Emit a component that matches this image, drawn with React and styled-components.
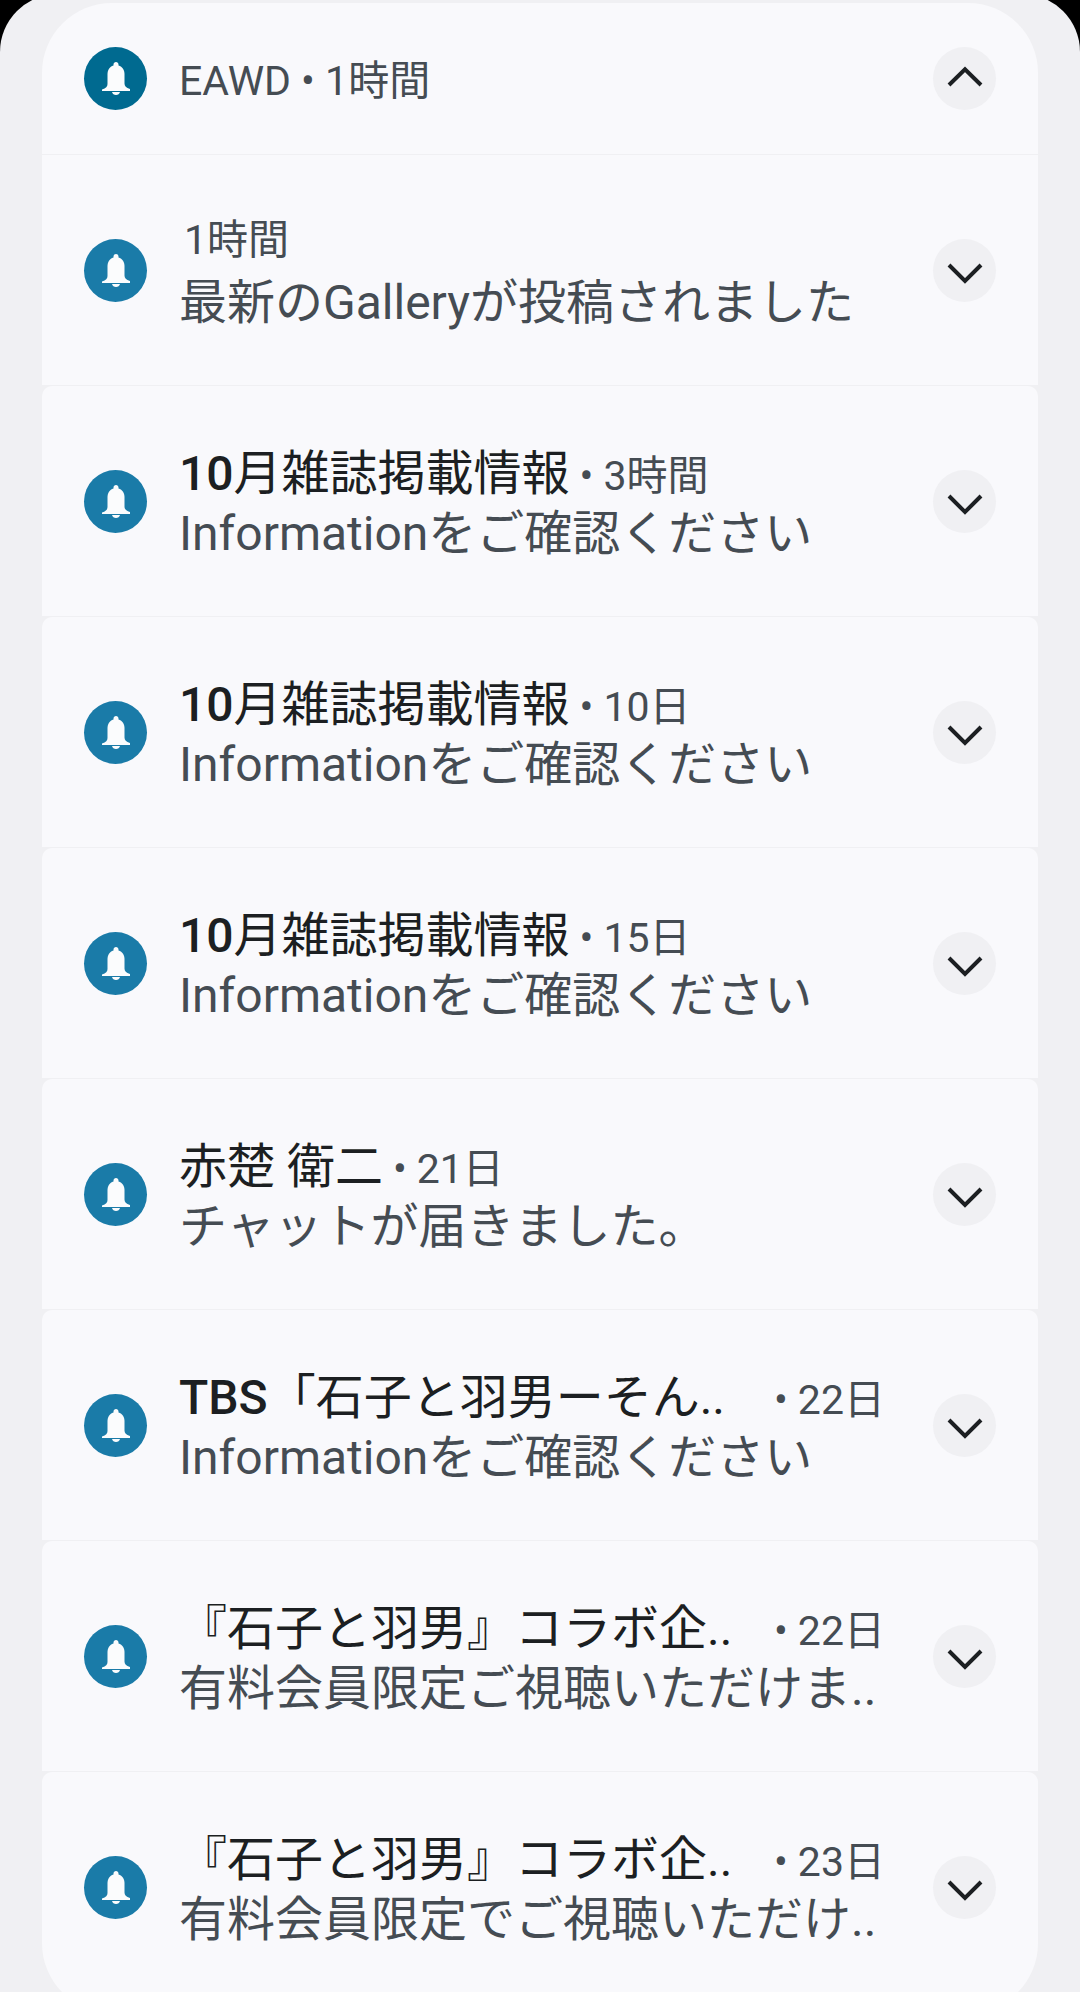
import styled, { createGlobalStyle } from 'styled-components';

const GlobalStyle = createGlobalStyle`
  html, body {
    margin: 0;
    padding: 0;
    background: #000;
    height: 1992px;
    overflow: hidden;
  }
  body {
    font-family: Roboto, "Noto Sans CJK JP", sans-serif;
  }
`;

const Screen = styled.div`
  width: 1080px;
  height: 1998px;
  margin-top: -6px;
  overflow: hidden;
  box-sizing: border-box;
  padding: 9px 42px 0 42px;
  background: #f0f0f3;
  border-radius: 58px 58px 0 0;
`;

const Header = styled.div`
  height: 152px;
  box-sizing: border-box;
  padding: 44px 42px 0;
  display: flex;
  justify-content: space-between;
  background: #f9f9fc;
  border-radius: 70px 70px 0 0;
  border-bottom: 1px solid #f0f0f3;
`;

const HeaderLeft = styled.div`
  display: flex;
  gap: 32px;
`;

const HeaderText = styled.div`
  height: 63px;
  font-size: 41px;
  line-height: 68px;
  color: #454c53;
`;

const Row = styled.div`
  height: 230px;
  box-sizing: border-box;
  padding: 0 42px;
  display: flex;
  align-items: center;
  background: #f9f9fc;
  border-radius: ${p => (p.$first ? '0' : '10px 10px 0 0')};
  margin-bottom: 1px;
  ${p => p.$last && 'height: 241px; padding-bottom: 11px; border-radius: 10px 10px 70px 70px;'}
`;

const Icon = styled.div`
  width: 63px;
  height: 63px;
  flex-shrink: 0;
  border-radius: 50%;
  display: flex;
  align-items: center;
  justify-content: center;
  background: ${p => (p.$dark ? '#006a90' : '#1a7ba8')};
`;

const Body = styled.div`
  flex: 1;
  min-width: 0;
  margin-left: 32px;
  padding-top: 6px;
`;

const TitleLine = styled.div`
  display: flex;
  align-items: baseline;
  height: 60px;
  line-height: ${p => (p.$lone ? '55px' : '60px')};
  white-space: nowrap;
`;

const Title = styled.span`
  font-size: 48px;
  font-weight: 400;
  color: #1c1f22;
  ${p => p.$width && `width: ${p.$width}px;`}
`;

const Latin = styled.span`
  font-weight: 500;
`;

const Time = styled.span`
  font-size: 41px;
  color: #454c53;
  ${p => p.$indent && `margin-left: ${p.$indent}px;`}
`;

const Dot = styled.span`
  font-size: 41px;
  color: #454c53;
  margin: 0 10px;
`;

const Message = styled.div`
  height: 60px;
  font-size: 48px;
  line-height: 60px;
  color: #454c53;
  white-space: nowrap;
`;

const Toggle = styled.div`
  width: 63px;
  height: 63px;
  flex-shrink: 0;
  border-radius: 50%;
  display: flex;
  align-items: center;
  justify-content: center;
  background: #f0f0f3;
`;

const Bell = () => (
  <svg width="28" height="33" viewBox="0 0 28 33">
    <path
      fill="#fbfcfd"
      d="M14 0c1.400 0 2.500 1 2.500 2.400v1c4 1.300 6 4.700 6 8.600v9.500c0 2.500 1.500 4.300 5.500 5.500V29H0v-1.500c4-1.200 5.500-3 5.500-5.500V12c0-3.900 2-7.300 6-8.600v-1C11.500 1 12.600 0 14 0z"
    />
    <path fill="#fbfcfd" d="M10 30h8c-.5 2-2 3-4 3s-3.500-1-4-3z" />
  </svg>
);

const Chevron = ({ up }) => (
  <svg width="36" height="36" viewBox="0 0 36 36">
    <path
      fill="none"
      stroke="#1c1f22"
      strokeWidth="4"
      d={up ? 'M2 24 18 8.300 34 24' : 'M2 13 18 29 34 13'}
    />
  </svg>
);

const rows = [
  { time: '1時間', message: '最新のGalleryが投稿されました', first: true },
  { latin: '10', title: '月雑誌掲載情報', time: '3時間', message: 'Informationをご確認ください' },
  { latin: '10', title: '月雑誌掲載情報', time: '10日', message: 'Informationをご確認ください' },
  { latin: '10', title: '月雑誌掲載情報', time: '15日', message: 'Informationをご確認ください' },
  { title: '赤楚 衛二', time: '21日', message: 'チャットが届きました。' },
  { latin: 'TBS', title: '「石子と羽男ーそん..', width: 585, time: '22日', message: 'Informationをご確認ください' },
  { title: '『石子と羽男』コラボ企..', width: 585, time: '22日', message: '有料会員限定ご視聴いただけま..' },
  { title: '『石子と羽男』コラボ企..', width: 585, time: '23日', message: '有料会員限定でご視聴いただけ..', last: true },
];

export default function App() {
  return (
    <>
      <GlobalStyle />
      <Screen>
        <Header>
          <HeaderLeft>
            <Icon $dark>
              <Bell />
            </Icon>
            <HeaderText>EAWD • 1時間</HeaderText>
          </HeaderLeft>
          <Toggle>
            <Chevron up />
          </Toggle>
        </Header>
        {rows.map((row, i) => (
          <Row key={i} $first={row.first} $last={row.last}>
            <Icon>
              <Bell />
            </Icon>
            <Body>
              <TitleLine $lone={!row.title}>
                {row.title && (
                  <Title $width={row.width}>
                    {row.latin && <Latin>{row.latin}</Latin>}
                    {row.title}
                  </Title>
                )}
                {row.title && <Dot>•</Dot>}
                <Time $indent={row.title ? 0 : 5}>{row.time}</Time>
              </TitleLine>
              <Message>{row.message}</Message>
            </Body>
            <Toggle>
              <Chevron />
            </Toggle>
          </Row>
        ))}
      </Screen>
    </>
  );
}
